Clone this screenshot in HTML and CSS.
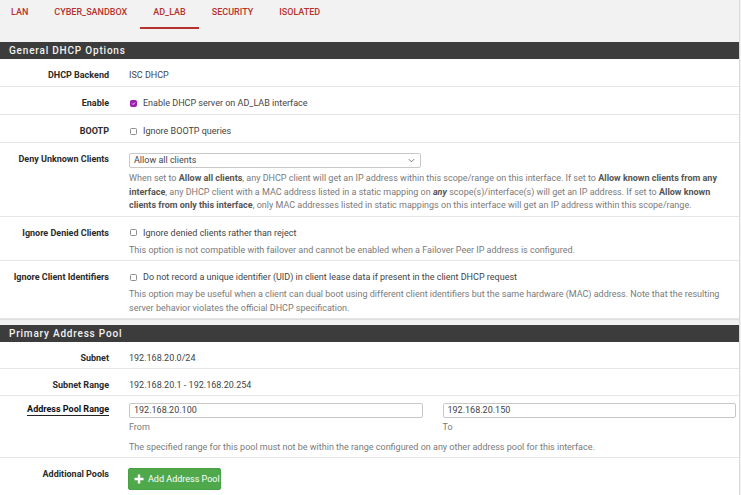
FILE: index.html
```html
<!DOCTYPE html>
<html lang="en">
<head>
<meta charset="utf-8">
<title>DHCP Server</title>
<link rel="stylesheet" href="styles.css">
</head>
<body>
<div class="page">
  <nav class="tabs">
    <a class="tab">LAN</a>
    <a class="tab">CYBER_SANDBOX</a>
    <a class="tab active">AD_LAB</a>
    <a class="tab">SECURITY</a>
    <a class="tab">ISOLATED</a>
  </nav>

  <section class="panel">
    <h2 class="panel-heading">General DHCP Options</h2>
    <div class="row">
      <div class="label">DHCP Backend</div>
      <div class="field">ISC DHCP</div>
    </div>
    <div class="row">
      <div class="label">Enable</div>
      <div class="field"><label class="check"><span class="box checked"><svg viewBox="0 0 8 8" width="8" height="8"><path d="M1.8 4.1 L3.3 5.6 L6.2 2.5" fill="none" stroke="#fff" stroke-width="1.3"/></svg></span>Enable DHCP server on AD_LAB interface</label></div>
    </div>
    <div class="row">
      <div class="label">BOOTP</div>
      <div class="field"><label class="check"><span class="box"></span>Ignore BOOTP queries</label></div>
    </div>
    <div class="row">
      <div class="label">Deny Unknown Clients</div>
      <div class="field">
        <div class="select">Allow all clients<svg class="chev" viewBox="0 0 8 5" width="7" height="5"><path d="M1 1 L4 4 L7 1" fill="none" stroke="#666" stroke-width="1"/></svg></div>
        <p class="help">When set to <b>Allow all clients</b>, any DHCP client will get an IP address within this scope/range on this interface. If set to <b>Allow known clients from any interface</b>, any DHCP client with a MAC address listed in a static mapping on <b><i>any</i></b> scope(s)/interface(s) will get an IP address. If set to <b>Allow known clients from only this interface</b>, only MAC addresses listed in static mappings on this interface will get an IP address within this scope/range.</p>
      </div>
    </div>
    <div class="row">
      <div class="label">Ignore Denied Clients</div>
      <div class="field">
        <label class="check"><span class="box"></span>Ignore denied clients rather than reject</label>
        <p class="help">This option is not compatible with failover and cannot be enabled when a Failover Peer IP address is configured.</p>
      </div>
    </div>
    <div class="row">
      <div class="label">Ignore Client Identifiers</div>
      <div class="field">
        <label class="check"><span class="box"></span>Do not record a unique identifier (UID) in client lease data if present in the client DHCP request</label>
        <p class="help">This option may be useful when a client can dual boot using different client identifiers but the same hardware (MAC) address. Note that the resulting server behavior violates the official DHCP specification.</p>
      </div>
    </div>
  </section>

  <section class="panel">
    <h2 class="panel-heading">Primary Address Pool</h2>
    <div class="row tight">
      <div class="label">Subnet</div>
      <div class="field">192.168.20.0/24</div>
    </div>
    <div class="row tight">
      <div class="label">Subnet Range</div>
      <div class="field">192.168.20.1 - 192.168.20.254</div>
    </div>
    <div class="row range">
      <div class="label"><span class="required">Address Pool Range</span></div>
      <div class="field">
        <div class="pair">
          <div>
            <div class="input">192.168.20.100</div>
            <p class="help sub">From</p>
          </div>
          <div>
            <div class="input">192.168.20.150</div>
            <p class="help sub">To</p>
          </div>
        </div>
        <p class="help">The specified range for this pool must not be within the range configured on any other address pool for this interface.</p>
      </div>
    </div>
    <div class="row last">
      <div class="label">Additional Pools</div>
      <div class="field">
        <button class="btn"><svg class="plus" viewBox="0 0 10 10" width="10" height="10"><path d="M5 0.5 V9.5 M0.5 5 H9.5" stroke="#fff" stroke-width="2.4"/></svg>Add Address Pool</button>
      </div>
    </div>
  </section>
</div>
</body>
</html>
```
FILE: styles.css
```css
* { box-sizing: border-box; }
html, body { margin: 0; padding: 0; }
body {
  background: #f2f2f2;
  font-family: Roboto, "Noto Sans", Arial, sans-serif;
  font-size: 9px;
  color: #333;
  width: 741px;
  height: 495px;
  overflow: hidden;
}
.page {
  width: 740px;
  min-height: 495px;
  border-right: 1px solid #dcdcdc;
}
.tabs {
  display: flex;
  height: 42px;
  margin-left: -2px;
}
.tab {
  display: block;
  height: 29px;
  padding: 7px 13px 0;
  line-height: 11px;
  font-size: 9px;
  font-weight: 500;
  color: #b5322f;
  border-bottom: 2px solid transparent;
}
.tab.active { border-bottom-color: #b5322f; }

.panel {
  background: #fff;
  margin-bottom: 6px;
  box-shadow: 0 1px 1px rgba(0,0,0,0.08);
}
.panel-heading {
  margin: 0;
  height: 17px;
  line-height: 17px;
  padding-left: 9px;
  background: #3c3c3c;
  color: #f2f2f2;
  font-size: 10px;
  font-weight: 500;
  letter-spacing: 0.8px;
}
.row {
  display: grid;
  grid-template-columns: 109px 1fr;
  column-gap: 20px;
  padding: 10px 3px 5px 0;
  border-bottom: 1px solid #e6e6e6;
  line-height: 12px;
}
.row.tight { padding-bottom: 4px; }
.row.range { padding-top: 7px; }
.row.last { border-bottom: 0; }
.label {
  text-align: right;
  font-weight: 700;
  color: #2b2b2b;
}
.required {
  color: #111;
  border-bottom: 1px solid #222;
  padding-bottom: 1px;
}
.field { color: #444; }
.check { display: flex; align-items: center; }
.box {
  width: 7px;
  height: 7px;
  margin: 0 6px 0 1px;
  border: 1px solid #8d8d8d;
  border-radius: 1.5px;
  display: flex;
  align-items: center;
  justify-content: center;
  flex: none;
}
.box.checked { background: #9c1fb0; border-color: #9c1fb0; }
.box svg { width: 7px; height: 7px; }
.help {
  margin: 5px 0 0;
  font-size: 9px;
  line-height: 13.5px;
  color: #7a7a7a;
}
.help:last-child { margin-bottom: -2px; }
.select + .help { margin-top: 4px; }
.pair + .help { margin-top: 6px; }
.help b { color: #555; }
.select {
  width: 292px;
  height: 15px;
  border: 1px solid #c8c8c8;
  border-radius: 2px;
  padding-left: 4px;
  font-size: 9px;
  line-height: 13px;
  color: #444;
  display: flex;
  align-items: center;
  justify-content: space-between;
}
.chev { margin-right: 5px; }
.pair {
  display: grid;
  grid-template-columns: 1fr 1fr;
  column-gap: 20px;
}
.input {
  height: 15px;
  border: 1px solid #c8c8c8;
  border-radius: 2px;
  padding-left: 4px;
  font-size: 9px;
  line-height: 13px;
  color: #444;
}
.help.sub { margin: 3px 0 0; }
.btn {
  display: flex;
  align-items: center;
  gap: 4px;
  height: 22px;
  width: 93px;
  margin-left: -1px;
  padding: 0 5px;
  background: #4fa84a;
  border: 1px solid #47a043;
  border-radius: 2px;
  color: #fff;
  font-family: Roboto, "Noto Sans", Arial, sans-serif;
  font-size: 9px;
  white-space: nowrap;
}
.plus { flex: none; width: 10px; height: 10px; }
```
